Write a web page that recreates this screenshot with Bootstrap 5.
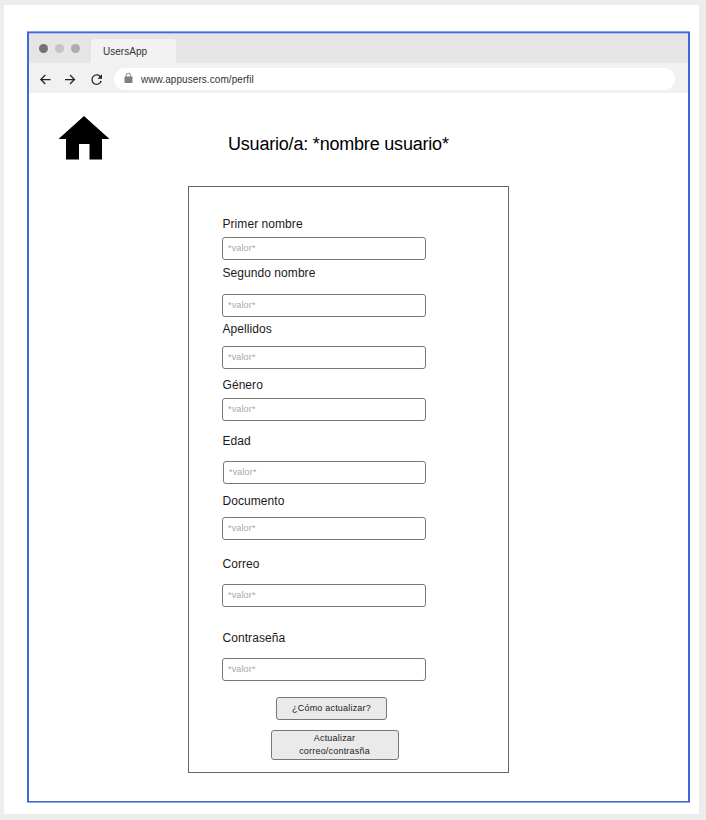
<!DOCTYPE html>
<html lang="es">
<head>
<meta charset="utf-8">
<meta name="viewport" content="width=device-width, initial-scale=1">
<title>UsersApp</title>
<link href="https://cdn.jsdelivr.net/npm/bootstrap@5.3.0/dist/css/bootstrap.min.css" rel="stylesheet">
<style>
body{background:#ededed;font-family:"Liberation Sans",Arial,sans-serif;width:706px;height:820px;padding:5px 7px 6px 4px;overflow:hidden;color:#000}
.sheet{height:809px;padding:27px 9px 0 23px}
.browser{height:770px;border:solid #4068d8;border-width:1px 2px;box-shadow:0 -1px #8ea4e6,0 1px #8ea4e6}
.tabs-bar{height:30px;background:#e5e5e5;padding-left:10px;border-top:1px solid #b4c0ea}
.dots{gap:7px;width:52px;padding-top:10px}
.dots span{width:9px;height:9px}
.tab-item{width:85px;height:24px;margin-top:5px;background:#f2f2f2;border-radius:4px 4px 0 0;padding-left:12px;font-size:10px;line-height:25px;letter-spacing:.02px;color:#333}
.tool-bar{height:30px;background:#f1f1f1;padding:2px 13px 0 10px}
.url{width:561px;height:22px;border-radius:11px;margin-left:11px;padding:1px 0 0 10px;font-size:10px;color:#333;letter-spacing:.07px}
.page-title{font-size:18px;line-height:22px;letter-spacing:-.2px;margin:40px 0 0 118px}
.house{margin:23px 0 0 29px}
.page-head{height:93px}
.panel{width:321px;height:587px;margin-left:159px;border:1px solid #666;padding:29px 0 0 33px}
.field-label{font-size:12px;line-height:16px;height:16px;letter-spacing:.06px;color:#1a1a1a;padding-left:.5px;margin:0}
.field-input{width:204px;height:23px;min-height:0;border:1px solid #777;border-radius:3px;padding:0 5px 2px;font-size:9px;line-height:19px;letter-spacing:.15px;color:#444;background:#fff}
.field-input::placeholder{color:#a8a8a8;opacity:1}
.g4{margin-top:4px}.g5{margin-top:5px}.g8{margin-top:8px}.g9{margin-top:9px}.g12{margin-top:12px}.g13{margin-top:13px}.g16{margin-top:16px}.g23{margin-top:23px}
.narrow{width:203px;margin-left:1px}
.act{border:1px solid #777;border-radius:3px;background:#eaeaea;font-size:9px;line-height:13px;letter-spacing:.2px;color:#1a1a1a;padding:0}
.act-help{width:111px;height:23px;margin:16px 0 0 54px}
.act-update{width:128px;height:30px;margin:10px 0 0 49px;padding-right:1px}
</style>
</head>
<body>
<div class="sheet bg-white">
<div class="browser bg-white">
  <div class="tabs-bar d-flex">
    <div class="dots d-flex"><span class="rounded-circle" style="background:#737373"></span><span class="rounded-circle" style="background:#c4c4c4"></span><span class="rounded-circle" style="background:#acacac"></span></div>
    <div class="tab-item">UsersApp</div>
  </div>
  <div class="tool-bar d-flex align-items-center">
    <svg width="64" height="14" viewBox="0 0 64 14" fill="none" stroke="#222" stroke-width="1.25"><path d="M11.500 7.500H2M6.300 3L1.800 7.500l4.500 4.500M26 7.500h9.500M31 3l4.500 4.500L31 12"/><path d="M61.700 5.200A4.700 4.700 0 1 0 62.200 9"/><path d="M63 2.200v4.500H58.500z" fill="#222" stroke="none"/></svg>
    <div class="url bg-white d-flex align-items-center"><svg class="me-2 mb-1" width="9" height="11" viewBox="0 0 9 11"><path d="M2.200 5V3.500a2.200 2.200 0 0 1 4.400 0v2" fill="none" stroke="#808080"/><rect x=".5" y="4.500" width="8" height="6.500" rx=".7" fill="#808080"/></svg><span>www.appusers.com/perfil</span></div>
  </div>
  <div class="page-head d-flex align-items-start">
    <svg class="house flex-shrink-0" width="52" height="44" viewBox="0 0 52 44"><path d="M26 0L51.500 23H44v20.500H31.500V28H21v15.500H8V23H.5z"/></svg>
    <h1 class="page-title fw-normal text-nowrap">Usuario/a: *nombre usuario*</h1>
  </div>
  <form class="panel">
    <label class="field-label d-block" for="f1">Primer nombre</label>
    <input class="form-control field-input g5" id="f1" placeholder="*valor*">
    <label class="field-label d-block g5" for="f2">Segundo nombre</label>
    <input class="form-control field-input g13" id="f2" placeholder="*valor*">
    <label class="field-label d-block g4" for="f3">Apellidos</label>
    <input class="form-control field-input g9" id="f3" placeholder="*valor*">
    <label class="field-label d-block g8" for="f4">Género</label>
    <input class="form-control field-input g5" id="f4" placeholder="*valor*">
    <label class="field-label d-block g12" for="f5">Edad</label>
    <input class="form-control field-input narrow g12" id="f5" placeholder="*valor*">
    <label class="field-label d-block g9" for="f6">Documento</label>
    <input class="form-control field-input g8" id="f6" placeholder="*valor*">
    <label class="field-label d-block g16" for="f7">Correo</label>
    <input class="form-control field-input g12" id="f7" placeholder="*valor*">
    <label class="field-label d-block g23" for="f8">Contraseña</label>
    <input class="form-control field-input g12" id="f8" placeholder="*valor*">
    <button type="button" class="btn act act-help d-block">¿Cómo actualizar?</button>
    <button type="button" class="btn act act-update d-block">Actualizar<br>correo/contrasña</button>
  </form>
</div>
</div>
<script src="https://cdn.jsdelivr.net/npm/bootstrap@5.3.0/dist/js/bootstrap.bundle.min.js"></script>
</body>
</html>
